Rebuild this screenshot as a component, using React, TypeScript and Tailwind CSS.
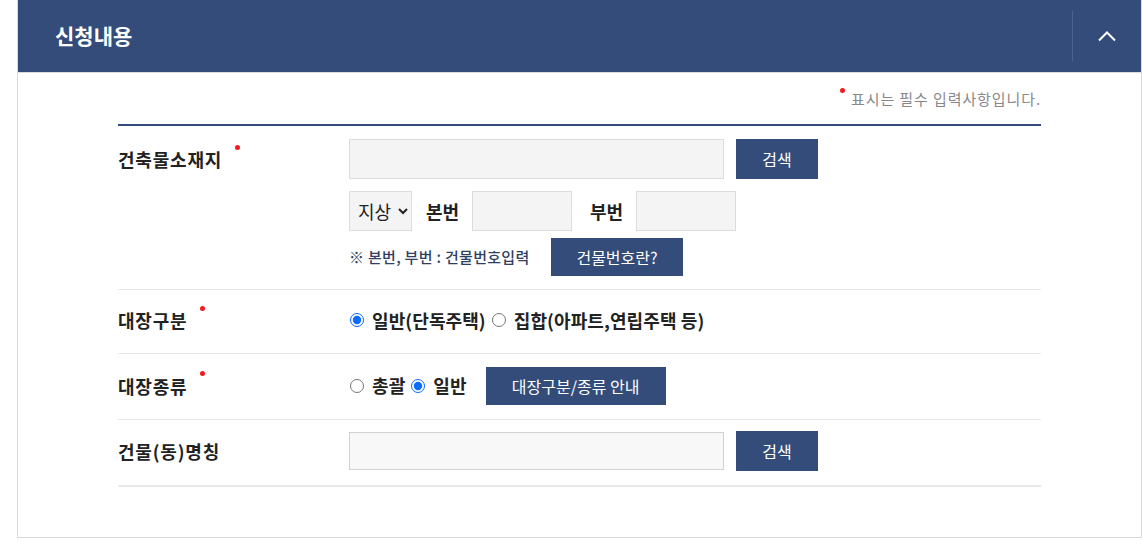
import React from 'react';

const font = { fontFamily: '"Noto Sans CJK KR", "Noto Sans", sans-serif' };

const Req: React.FC = () => (
    <span className="relative -top-[15px] ml-[13px] inline-block h-[5px] w-[5px] rounded-full bg-[#ee1c1c] align-middle" />
);

const Label: React.FC<{ text: string; req?: boolean }> = ({ text, req }) => (
    <div className="w-[231px] shrink-0 text-[18px] font-bold text-[#222] leading-none tracking-[0.8px]">
        {text}
        {req && <Req />}
    </div>
);

const NavyButton: React.FC<{ text: string; className: string }> = ({ text, className }) => (
    <button className={`bg-[#344c7a] text-white text-[16px] leading-none ${className}`}>{text}</button>
);

const Radio: React.FC<{ label: string; checked?: boolean; name: string }> = ({ label, checked, name }) => (
    <label className="flex items-center text-[18px] font-bold text-[#222] tracking-[0.1px]">
        <input type="radio" name={name} defaultChecked={checked} className="m-0 mr-[8px] ml-[1px] h-[14px] w-[14px] accent-[#0a6cff]" />
        {label}
    </label>
);

const App: React.FC = () => {
    return (
        <div className="h-[549px] w-full bg-white overflow-hidden" style={font}>
            <div className="ml-[17px] w-[1125px] h-[538px] border-r border-b border-l border-[#d9d9d9] flex flex-col">
                <div className="h-[73px] bg-[#344c7a] border-b border-[#dcdcdc] flex items-center">
                    <h1 className="ml-[37px] text-[21px] font-bold text-white">신청내용</h1>
                    <div className="ml-auto h-[50px] w-px bg-[#4c6290]" />
                    <button className="w-[68px] h-full flex items-center justify-center">
                        <svg width="20" height="12" viewBox="0 0 20 12" fill="none">
                            <path d="M2 10.5 L10 2.5 L18 10.5" stroke="white" strokeWidth="2" />
                        </svg>
                    </button>
                </div>

                <div className="px-[100px]">
                    <div className="h-[51px] flex items-center justify-end pt-[2px] text-[15px] text-[#888] tracking-[0.9px]">
                        <span className="relative -top-[9px] mr-[6px] inline-block h-[5px] w-[5px] rounded-full bg-[#ee1c1c]" />
                        표시는 필수 입력사항입니다.
                    </div>
                    <div className="h-[2px] bg-[#344c7a]" />

                    <div className="flex pt-[13px] pb-[13px] border-b border-[#e8e8e8]">
                        <div className="h-[40px] flex items-center">
                            <Label text="건축물소재지" req />
                        </div>
                        <div className="flex flex-col">
                            <div className="flex items-center gap-[12px]">
                                <input className="w-[375px] h-[40px] bg-[#f4f4f4] border border-[#dcdcdc]" />
                                <NavyButton text="검색" className="w-[82px] h-[40px]" />
                            </div>
                            <div className="flex items-center mt-[12px]">
                                <select className="w-[63px] h-[40px] bg-[#f4f4f4] border border-[#dcdcdc] text-[18px] text-[#222] pl-[4px]">
                                    <option>지상</option>
                                    <option>지하</option>
                                </select>
                                <span className="ml-[14px] w-[46px] text-[18px] font-bold text-[#222]">본번</span>
                                <input className="w-[100px] h-[40px] bg-[#f4f4f4] border border-[#dcdcdc]" />
                                <span className="ml-[18px] w-[46px] text-[18px] font-bold text-[#222]">부번</span>
                                <input className="w-[100px] h-[40px] bg-[#f4f4f4] border border-[#dcdcdc]" />
                            </div>
                            <div className="flex items-center mt-[7px]">
                                <span className="w-[202px] text-[15px] font-medium text-[#2f3f63] tracking-[0.3px]">※ 본번, 부번 : 건물번호입력</span>
                                <NavyButton text="건물번호란?" className="w-[132px] h-[38px]" />
                            </div>
                        </div>
                    </div>

                    <div className="flex items-center h-[64px] pb-[3px] border-b border-[#e8e8e8]">
                        <Label text="대장구분" req />
                        <div className="flex items-center gap-[5px]">
                            <Radio name="g1" label="일반(단독주택)" checked />
                            <Radio name="g1" label="집합(아파트,연립주택 등)" />
                        </div>
                    </div>

                    <div className="flex items-center h-[66px] pb-[2px] border-b border-[#e8e8e8]">
                        <Label text="대장종류" req />
                        <div className="flex items-center gap-[5px]">
                            <Radio name="g2" label="총괄" />
                            <Radio name="g2" label="일반" checked />
                            <NavyButton text="대장구분/종류 안내" className="ml-[14px] w-[180px] h-[38px]" />
                        </div>
                    </div>

                    <div className="flex items-center h-[67px] pb-[3px] border-b-2 border-[#e8e8e8]">
                        <Label text="건물(동)명칭" />
                        <div className="flex items-center gap-[12px]">
                            <input className="w-[375px] h-[38px] bg-[#f8f8f8] border border-[#d2d2d2]" />
                            <NavyButton text="검색" className="w-[82px] h-[40px]" />
                        </div>
                    </div>
                </div>
            </div>
        </div>
    );
};

export default App;
